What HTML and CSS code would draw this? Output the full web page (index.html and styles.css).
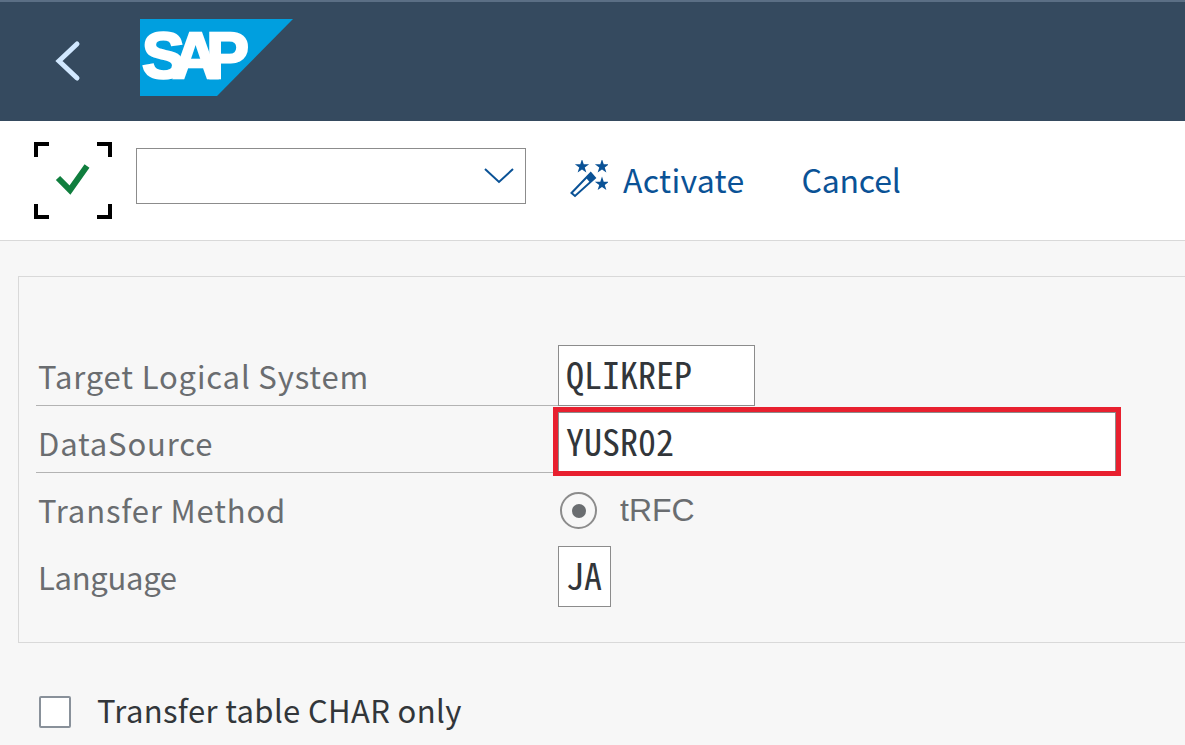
FILE: index.html
```html
<!DOCTYPE html>
<html lang="en">
<head>
<meta charset="utf-8">
<title>Activate</title>
<link rel="stylesheet" href="styles.css">
</head>
<body>
<header class="shell">
  <svg class="back" width="30" height="44" viewBox="0 0 30 44"><path d="M23 6 L5 23 L23 40" fill="none" stroke="#d1e8ff" stroke-width="5" stroke-linecap="round" stroke-linejoin="miter"/></svg>
  <svg class="logo" width="153" height="77" viewBox="0 0 153 77">
    <polygon points="0,0 153,0 77,77 0,77" fill="#009fdf"/>
    <text x="2" y="59" class="logo-text" textLength="107" lengthAdjust="spacing">SAP</text>
  </svg>
</header>
<nav class="toolbar">
  <button class="enter" type="button">
    <svg width="78" height="77" viewBox="0 0 78 77">
      <path d="M15 2 H2 V15 M63 2 H76 V15 M2 62 V75 H15 M76 62 V75 H63" fill="none" stroke="#000" stroke-width="4"/>
      <path d="M24 36 L36 48 L53 24" fill="none" stroke="#107e3e" stroke-width="6"/>
    </svg>
  </button>
  <div class="select">
    <svg width="30" height="17" viewBox="0 0 30 17"><path d="M1 2 L15 15 L29 2" fill="none" stroke="#0a5296" stroke-width="2"/></svg>
  </div>
  <a class="action activate">
    <svg width="38" height="38" viewBox="0 0 38 38">
      <g fill="#0a5296">
        <path transform="translate(12 6.5) scale(1.15)" d="M0-6.5 1.5-2 6.2-2 2.4.8 3.8 5.3 0 2.5-3.8 5.3-2.4.8-6.2-2-1.5-2Z"/>
        <path transform="translate(32 6.5) scale(1.15)" d="M0-6.5 1.5-2 6.2-2 2.4.8 3.8 5.3 0 2.5-3.8 5.3-2.4.8-6.2-2-1.5-2Z"/>
        <path transform="translate(32 24) scale(1.15)" d="M0-6.5 1.5-2 6.2-2 2.4.8 3.8 5.3 0 2.5-3.8 5.3-2.4.8-6.2-2-1.5-2Z"/>
        <path d="M20.7 13 L25 18 L20 22.5 L15.7 17.5Z"/>
      </g>
      <path d="M1.5 33 L5 36 L25 18 L20.7 13Z" fill="none" stroke="#0a5296" stroke-width="2"/>
    </svg>
    <span>Activate</span>
  </a>
  <a class="action cancel"><span>Cancel</span></a>
</nav>
<main class="content">
  <section class="group">
    <div class="row"><label class="label ruled">Target Logical System</label><div class="value"><div class="input wide">QLIKREP</div></div></div>
    <div class="row"><label class="label ruled">DataSource</label><div class="value"><div class="input full">YUSR02<span class="highlight"></span></div></div></div>
    <div class="row"><label class="label">Transfer Method</label><div class="value radio-cell"><span class="radio"><span class="dot"></span></span><span class="radio-text">tRFC</span></div></div>
    <div class="row"><label class="label label-tight">Language</label><div class="value"><div class="input short">JA</div></div></div>
  </section>
  <div class="check-row"><span class="checkbox"></span><span class="check-text">Transfer table CHAR only</span></div>
</main>
</body>
</html>
```
FILE: styles.css
```css
* { box-sizing: border-box; }
html, body { margin: 0; height: 745px; overflow: hidden; }
body {
  background: #f7f7f7;
  font-family: "Noto Sans CJK JP", "Liberation Sans", sans-serif;
  color: #32363a;
}
.shell {
  height: 121px;
  background: #354a5f;
  border-top: 2px solid #5b6f85;
  display: flex;
  align-items: flex-start;
  padding-left: 54px;
}
.back { margin-top: 36px; flex: none; }
.logo { margin-top: 17px; margin-left: 56px; flex: none; }
.logo-text {
  font-family: "Liberation Sans", sans-serif;
  font-weight: 700;
  font-size: 64px;
  fill: #fff;
  stroke: #fff;
  stroke-width: 2.5px;
}
.toolbar {
  height: 120px;
  background: #fff;
  border-bottom: 1px solid #d9d9d9;
  display: flex;
  align-items: center;
  padding-left: 34px;
}
.enter { border: 0; padding: 0; background: none; width: 78px; height: 77px; display: block; margin-right: 24px; }
.enter svg { display: block; }
.select {
  width: 390px;
  height: 56px;
  border: 1px solid #8c8c8c;
  background: #fff;
  display: flex;
  align-items: center;
  justify-content: flex-end;
  padding-right: 11px;
  margin: 0 44px 10px 0;
}
.action {
  display: flex;
  align-items: center;
  color: #0a5296;
  font-size: 32px;
  line-height: 40px;
  font-weight: 400;
  margin-bottom: 3px;
}
.activate { gap: 15px; margin-right: 57px; letter-spacing: 0.3px; }
.cancel { letter-spacing: -0.2px; }
.group {
  margin: 35px 0 0 18px;
  border: 1px solid #d9d9d9;
  border-right: 0;
  padding: 62px 0 35px 17px;
  height: 367px;
}
.row { display: flex; height: 67px; }
.label {
  width: 522px;
  flex: none;
  padding-left: 2px;
  color: #6a6d70;
  font-size: 31px;
  line-height: 73px;
  letter-spacing: 0.85px;
  white-space: nowrap;
}
.label-tight { letter-spacing: -0.3px; }
.ruled { border-bottom: 1px solid #b3b3b3; }
.value { flex: 1; display: flex; align-items: flex-end; }
.input {
  height: 61px;
  border: 1px solid #8c8c8c;
  background: #fff;
  font-family: "Noto Sans Mono CJK JP", "Noto Sans CJK JP", "Liberation Mono", monospace;
  font-size: 36px;
  line-height: 54px;
  padding-left: 7px;
  color: #32363a;
  position: relative;
}
.wide { width: 197px; }
.full { width: 558px; }
.short { width: 53px; }
.highlight {
  position: absolute;
  left: -6px;
  top: -6px;
  width: 568px;
  height: 69px;
  border: 5px solid #e8202f;
  pointer-events: none;
}
.radio-cell { align-items: center; padding: 8px 0 0 2px; }
.radio {
  width: 37px;
  height: 37px;
  border: 2px solid #8c8c8c;
  border-radius: 50%;
  display: flex;
  align-items: center;
  justify-content: center;
  background: #f7f7f7;
  margin-right: 23px;
}
.dot { width: 14px; height: 14px; border-radius: 50%; background: #6a6d70; }
.radio-text { font-family: "Liberation Sans", sans-serif; font-size: 32px; color: #6a6d70; }
.check-row { display: flex; align-items: center; margin: 52px 0 0 39px; height: 33px; }
.checkbox { width: 32px; height: 32px; border: 2px solid #89919a; border-radius: 2px; background: #fff; margin-right: 26px; }
.check-text { font-size: 31px; line-height: 36px; letter-spacing: 0.37px; white-space: nowrap; margin-bottom: 3px; }
```
